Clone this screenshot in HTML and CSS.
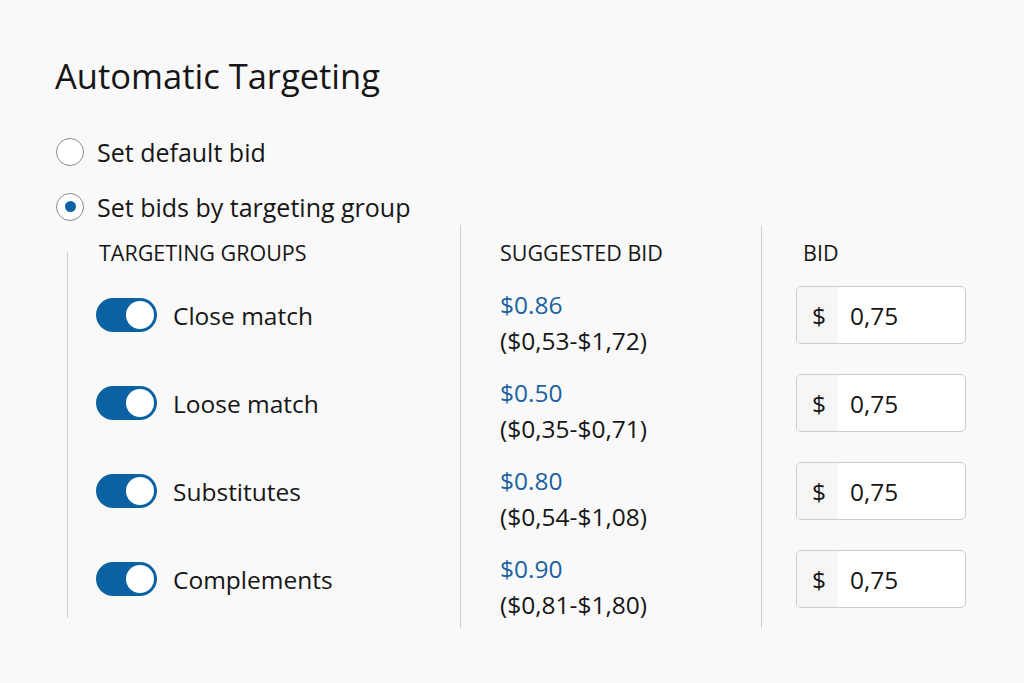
FILE: index.html
```html
<!DOCTYPE html>
<html lang="en">
<head>
    <meta charset="UTF-8">
    <meta name="viewport" content="width=device-width, initial-scale=1.0">
    <title>Automatic Targeting</title>
    <link rel="stylesheet" href="styles.css">
</head>
<body>
    <div class="panel">
        <h1 class="title">Automatic Targeting</h1>

        <label class="radio_row">
            <span class="radio"></span>
            <span>Set default bid</span>
        </label>
        <label class="radio_row">
            <span class="radio checked"></span>
            <span>Set bids by targeting group</span>
        </label>

        <div class="groups">
            <div class="col col_target">
                <div class="col_head">TARGETING GROUPS</div>
                <div class="row"><span class="toggle"></span>Close match</div>
                <div class="row"><span class="toggle"></span>Loose match</div>
                <div class="row"><span class="toggle"></span>Substitutes</div>
                <div class="row"><span class="toggle"></span>Complements</div>
            </div>
            <div class="col col_suggest">
                <div class="col_head">SUGGESTED BID</div>
                <div class="row"><div><span class="price">$0.86</span><br>($0,53-$1,72)</div></div>
                <div class="row"><div><span class="price">$0.50</span><br>($0,35-$0,71)</div></div>
                <div class="row"><div><span class="price">$0.80</span><br>($0,54-$1,08)</div></div>
                <div class="row"><div><span class="price">$0.90</span><br>($0,81-$1,80)</div></div>
            </div>
            <div class="col col_bid">
                <div class="col_head">BID</div>
                <div class="row"><div class="bid_input"><span class="prefix">$</span><span class="value">0,75</span></div></div>
                <div class="row"><div class="bid_input"><span class="prefix">$</span><span class="value">0,75</span></div></div>
                <div class="row"><div class="bid_input"><span class="prefix">$</span><span class="value">0,75</span></div></div>
                <div class="row"><div class="bid_input"><span class="prefix">$</span><span class="value">0,75</span></div></div>
            </div>
        </div>
    </div>
</body>
</html>
```
FILE: styles.css
```css
*{
    margin: 0;
    padding: 0;
    box-sizing: border-box;
}
body{
    background: #f9f9f9;
    color: #161616;
    font-family: "Open Sans", "Noto Sans", sans-serif;
}
.panel{
    padding: 54px 0 0 56px;
}
.title{
    font-size: 34.5px;
    font-weight: 400;
    line-height: 44px;
    margin-bottom: 26px;
    margin-left: -1px;
}
.radio_row{
    display: flex;
    align-items: center;
    gap: 13px;
    height: 55px;
    font-size: 25px;
}
.radio{
    width: 28px;
    height: 28px;
    border: 1.5px solid #8c8c8c;
    border-radius: 50%;
    background: #fff;
    display: flex;
    align-items: center;
    justify-content: center;
}
.radio.checked::after{
    content: "";
    width: 11px;
    height: 11px;
    border-radius: 50%;
    background: #0b63a5;
}
.groups{
    display: flex;
    margin-left: 11px;
    margin-top: -9px;
    height: 403px;
}
.col{
    border-left: 1.5px solid #cfcfcf;
}
.col_head{
    height: 46px;
    padding-top: 15px;
    font-size: 21.5px;
    line-height: 26px;
}
.row{
    height: 88px;
    display: flex;
    align-items: center;
    font-size: 24.5px;
}
.col_target{
    width: 393px;
    align-self: flex-start;
    margin-top: 27px;
    height: 366px;
    padding-left: 28px;
}
.col_target .col_head{
    margin-top: -27px;
    padding-left: 3px;
}
.toggle{
    width: 61px;
    height: 34px;
    border-radius: 17px;
    background: #0a62a3;
    margin-right: 16px;
    display: flex;
    align-items: center;
    justify-content: flex-end;
    padding-right: 3px;
}
.toggle::after{
    content: "";
    width: 28px;
    height: 28px;
    border-radius: 50%;
    background: #fff;
}
.col_suggest{
    width: 301px;
    padding-left: 39px;
}
.col_suggest .row{
    align-items: flex-start;
    padding-top: 16px;
    line-height: 36px;
    font-size: 24.5px;
}
.price{
    color: #1b62a0;
}
.col_bid{
    padding-left: 34px;
}
.col_bid .col_head{
    padding-left: 7px;
}
.bid_input{
    width: 170px;
    height: 58px;
    border: 1.5px solid #cdcdcd;
    border-radius: 5px;
    background: #fff;
    display: flex;
    overflow: hidden;
}
.prefix{
    width: 41px;
    background: #f6f6f6;
    display: flex;
    align-items: center;
    padding-left: 15px;
}
.value{
    display: flex;
    align-items: center;
    padding-left: 12px;
}
```
